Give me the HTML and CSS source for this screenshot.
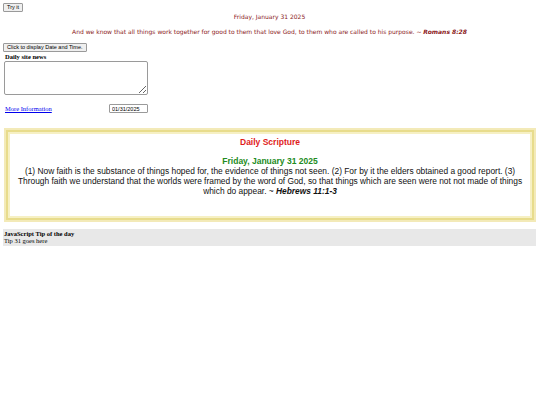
FILE: index.html
```html
<!DOCTYPE html>
<html>
<head>
<meta charset="utf-8">
<link rel="stylesheet" href="styles.css">
</head>
<body>
<button class="btn">Try it</button>
<p class="date-top">Friday, January 31 2025</p>
<p class="verse">And we know that all things work together for good to them that love God, to them who are called to his purpose. ~ <b><i>Romans 8:28</i></b></p>
<button class="btn btn-wide">Click to display Date and Time.</button>
<div class="news-label">Daily site news</div>
<textarea class="news"></textarea>
<div class="info-row">
  <a class="more" href="#">More Information</a>
  <input class="date-input" type="text" value="01/31/2025">
</div>
<div class="scripture">
  <div class="scripture-title">Daily Scripture</div>
  <div class="scripture-date">Friday, January 31 2025</div>
  <div class="scripture-text">(1) Now faith is the substance of things hoped for, the evidence of things not seen. (2) For by it the elders obtained a good report. (3) Through faith we understand that the worlds were framed by the word of God, so that things which are seen were not not made of things which do appear. ~ <b><i>Hebrews 11:1-3</i></b></div>
</div>
<div class="tip">
  <div class="tip-title">JavaScript Tip of the day</div>
  <div class="tip-text">Tip 31 goes here</div>
</div>
</body>
</html>
```

FILE: styles.css
```css
html, body {
  margin: 0;
  padding: 0;
  background: #fff;
}
body {
  padding: 3px 4px 3px 3px;
  font-family: "Liberation Serif", serif;
  font-size: 6.5px;
  color: #000;
}
.btn {
  display: block;
  font-family: "Liberation Sans", Arial, sans-serif;
  font-size: 5.5px;
  height: 9px;
  padding: 0 3px;
  margin: 0;
  border: 1px solid #9a9a9a;
  border-radius: 1px;
  background: #efefef;
  color: #000;
  line-height: 7px;
}
.date-top {
  margin: 1px 0 0;
  text-align: center;
  font-family: "DejaVu Sans", sans-serif;
  font-size: 6px;
  color: #8b1a1a;
  line-height: 8px;
}
.verse {
  margin: 7px 0 0;
  text-align: center;
  font-family: "DejaVu Sans", sans-serif;
  font-size: 6px;
  color: #8b1a1a;
  line-height: 8px;
}
.btn-wide {
  margin-top: 7px;
}
.news-label {
  font-weight: bold;
  margin: 1px 0 0 2px;
  line-height: 7px;
}
.news {
  display: block;
  width: 144px;
  height: 34px;
  box-sizing: border-box;
  margin: 1px 0 0 1px;
  border: 1px solid #9a9a9a;
  border-radius: 2px;
  resize: both;
}
.info-row {
  display: flex;
  align-items: center;
  margin-top: 9px;
  padding-left: 2px;
}
.more {
  color: #0000ee;
  width: 104px;
}
.date-input {
  width: 39px;
  height: 9px;
  box-sizing: border-box;
  font-family: "Liberation Sans", Arial, sans-serif;
  font-size: 5.5px;
  padding: 0 2px;
  border: 1px solid #9a9a9a;
  border-radius: 1px;
  margin: 0;
}
.scripture {
  margin: 15px 0 0 1px;
  border: 2px solid #f3eab8;
  box-shadow: inset 0 0 0 2px #e8dc8c, inset 0 0 0 4px #f6f0c4;
  padding: 6px 9px 24px;
  text-align: center;
  font-family: "Liberation Sans", Arial, sans-serif;
}
.scripture-title {
  color: #e01b1b;
  font-weight: bold;
  font-size: 8.5px;
  line-height: 12px;
}
.scripture-date {
  margin-top: 8px;
  color: #228b22;
  font-weight: bold;
  font-size: 8.5px;
  line-height: 10px;
}
.scripture-text {
  color: #111;
  font-size: 8.4px;
  line-height: 10px;
}
.tip {
  margin-top: 7px;
  background: #e8e8e8;
  padding: 1px 0 2px 1px;
}
.tip-title {
  font-weight: bold;
  line-height: 7px;
}
.tip-text {
  line-height: 7px;
}
```
